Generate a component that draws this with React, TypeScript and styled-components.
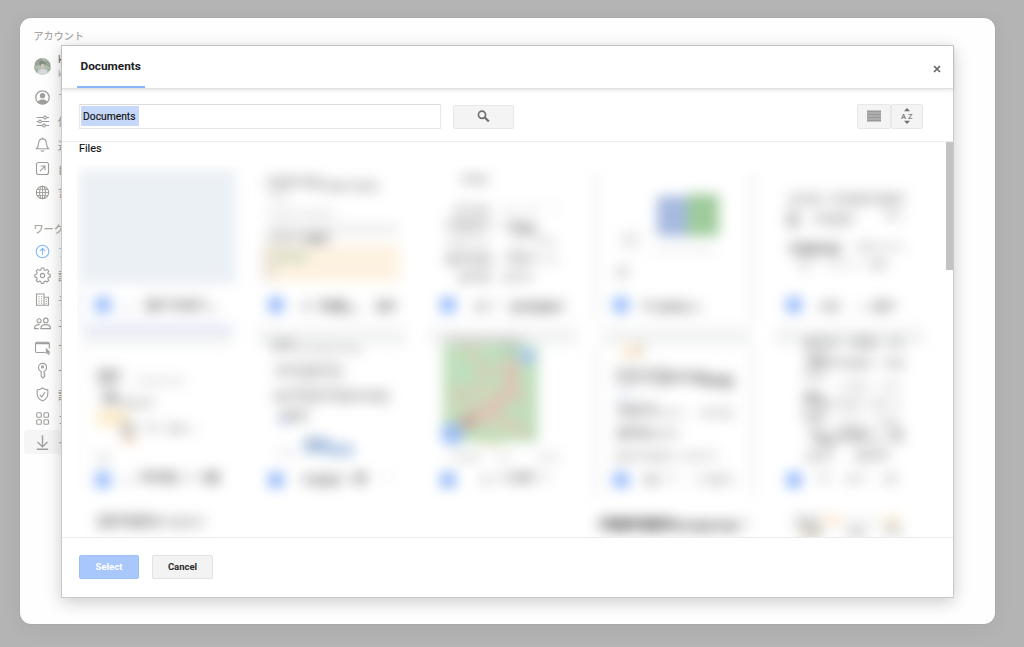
import React from "react";
import styled, { createGlobalStyle } from "styled-components";

const GlobalStyle = createGlobalStyle`
  * { box-sizing: border-box; }
  body {
    margin: 0;
    background: #b4b4b4;
    font-family: Roboto, "Noto Sans CJK JP", sans-serif;
    overflow: hidden;
  }
`;

/* ---------- settings window ---------- */

const Page = styled.div`
  height: 647px;
  padding: 18px 29px 23px 20px;
  background: #b4b4b4;
`;

const SettingsWindow = styled.div`
  position: relative;
  display: flex;
  width: 975px;
  height: 606px;
  border-radius: 11px;
  background: #fefefe;
  box-shadow: 0 4px 22px rgba(0, 0, 0, 0.06), 0 0 1px rgba(0, 0, 0, 0.25);
`;

const Sidebar = styled.nav`
  width: 170px;
  padding: 11px 4px;
  border-radius: 11px 0 0 11px;
  overflow: hidden;
  white-space: nowrap;
`;

const GroupLabel = styled.div<{ $first?: boolean }>`
  height: 16px;
  margin-top: ${(p) => (p.$first ? 0 : "17.500px")};
  margin-bottom: ${(p) => (p.$first ? "8px" : "2.200px")};
  padding-left: 9.5px;
  font-size: 10px;
  line-height: 16px;
  font-weight: 500;
  letter-spacing: 0.1px;
  color: #a8a7a4;
`;

const Profile = styled.div`
  display: flex;
  align-items: center;
  gap: 7px;
  height: 27px;
  padding-left: 10px;
  margin-bottom: 5.400px;
`;

const ProfileText = styled.div`
  display: flex;
  flex-direction: column;
  font-size: 11px;
  line-height: 14px;
  color: #777;
  small {
    font-size: 9.5px;
    color: #b5b5b5;
  }
`;

const NavRow = styled.div<{ $accent?: boolean; $selected?: boolean }>`
  display: flex;
  align-items: center;
  gap: 7px;
  height: 23.8px;
  padding-left: 10px;
  border-radius: 4px;
  font-size: 11px;
  color: ${(p) => (p.$accent ? "#8ab9f5" : "#9c9b98")};
  background: ${(p) => (p.$selected ? "#f5f5f5" : "transparent")};
  svg {
    flex: none;
    color: ${(p) => (p.$accent ? "#82b6fa" : "#9f9e9b")};
  }
`;

const icons: Record<string, React.ReactNode> = {
  account: (
    <>
      <circle cx="8" cy="8" r="6.700" strokeWidth="1.300" />
      <circle cx="8" cy="6.2" r="2.6" fill="currentColor" stroke="none" />
      <path d="M3.300 12.600C4.400 10.600 6 10 8 10s3.600.6 4.700 2.600A6.500 6.500 0 0 1 3.300 12.600Z" fill="currentColor" stroke="none" />
    </>
  ),
  sliders: (
    <>
      <path d="M2 4h7M12 4h2.500M2 8h2M7 8h7.500M2 12h6M11 12h3.500" />
      <circle cx="10.500" cy="4" r="1.400" />
      <circle cx="5.500" cy="8" r="1.400" />
      <circle cx="9.500" cy="12" r="1.400" />
    </>
  ),
  bell: (
    <>
      <path d="M2 12.200c1.600-1.500 2-2.600 2.100-5.400C4.300 4 5.600 2.400 8 2.400s3.700 1.600 3.900 4.400c.1 2.800.5 3.900 2.100 5.400Z" />
      <path d="M8 2.400V1M6.400 13.800c.5 1.300 2.700 1.300 3.200 0" />
    </>
  ),
  arrowBox: (
    <>
      <rect x="2" y="2" width="12" height="12" rx="2" />
      <path d="M5.500 10.600l4.700-4.800M6.300 5.500h4.200v4.200" />
    </>
  ),
  globe: (
    <>
      <circle cx="8" cy="8" r="6.200" />
      <ellipse cx="8" cy="8" rx="2.900" ry="6.200" />
      <path d="M8 1.800v12.400M1.800 8h12.400M2.600 4.900h10.800M2.600 11.100h10.800" strokeWidth=".9" />
    </>
  ),
  upgrade: (
    <>
      <circle cx="8" cy="8" r="6.300" />
      <path d="M8 11.200V5.200M5.600 7.300L8 4.900l2.400 2.400" />
    </>
  ),
  gear: (
    <>
      <path
        d="M6.800.5h2.400l.5 1.900 1.200.5 1.700-1 1.700 1.700-1 1.700.5 1.200 1.900.5v2.400l-1.900.5-.5 1.200 1 1.700-1.700 1.700-1.700-1-1.200.5-.5 1.900H6.800l-.5-1.900-1.200-.5-1.700 1-1.700-1.700 1-1.700-.5-1.200L.3 9.400V7L2.200 6.500l.5-1.200-1-1.700 1.700-1.700 1.700 1 1.200-.5Z"
        strokeLinejoin="round"
      />
      <circle cx="8" cy="8" r="2.100" />
    </>
  ),
  building: (
    <>
      <path d="M2 13.700V2.500h7.500v11.200ZM9.500 5.800H14v7.900H9.500" />
      <path d="M4 5h1M6.600 5h1M4 7.300h1M6.600 7.300h1M4 9.600h1M6.600 9.600h1M4 11.800h1M6.600 11.800h1M11.300 8h1M11.300 10h1M11.300 12h1" />
    </>
  ),
  people: (
    <>
      <circle cx="4.600" cy="5.200" r="2" />
      <circle cx="11.300" cy="4.900" r="2.300" />
      <path d="M6.300 13.100c0-2.500 1.900-4 5-4s4.700 1.500 4.700 4ZM5.400 9.200C2 8.700 0 10.500 0 13.100h4.200" />
    </>
  ),
  browser: (
    <>
      <path d="M11 13H2.200C1.300 13 1 12.500 1 12V4c0-.8.4-1.200 1.200-1.200h11.400c.8 0 1.200.4 1.200 1.200v5" />
      <path d="M1.500 3.900h13" strokeWidth="1.700" />
      <path d="M11.700 8.700v5.600l1.200-1 1 2 .9-.4-.8-2h1.600Z" fill="currentColor" strokeWidth=".5" />
    </>
  ),
  key: (
    <>
      <circle cx="8" cy="4.400" r="1" />
      <path d="M6.700 8.900C4.900 8.200 4 6.900 4 4.900 4 2.600 5.700.9 8 .9s4 1.700 4 4c0 2-.9 3.300-2.500 4v1.400l1 1-1 1.200.9 1-2 2-1.700-1.700Z" />
    </>
  ),
  shield: (
    <>
      <path d="M8 1.500c1.700 1.200 3.300 1.700 5.300 1.900v4.200c0 3.400-2.200 5.600-5.300 7-3.100-1.400-5.300-3.600-5.300-7V3.400C4.700 3.200 6.300 2.700 8 1.500Z" />
      <path d="M5.300 8.500l2 1.900 3.300-4.600" />
    </>
  ),
  grid: (
    <>
      <rect x="2.200" y="2.200" width="4.600" height="4.600" rx="1" />
      <rect x="9.400" y="2.200" width="4.600" height="4.600" rx="1" />
      <rect x="2.200" y="9.200" width="4.600" height="4.600" rx="1" />
      <rect x="9.400" y="9.200" width="4.600" height="4.600" rx="1" />
    </>
  ),
  download: <path d="M8 .8v11.400M3 7.600l5 4.800 5-4.800M2.300 14.800h11.400" strokeWidth="1.400" />,
};

const NavIcon = ({ name }: { name: string }) => (
  <svg width="17" height="17" viewBox="-.5 -.5 17 17" fill="none" stroke="currentColor" strokeWidth="1.1">
    {icons[name]}
  </svg>
);

const Avatar = () => (
  <svg width="17" height="17" viewBox="0 0 17 17">
    <defs>
      <clipPath id="face"><circle cx="8.500" cy="8.500" r="8.400" /></clipPath>
      <filter id="soft"><feGaussianBlur stdDeviation=".55" /></filter>
    </defs>
    <g clipPath="url(#face)">
      <rect width="17" height="17" fill="#b4beb2" />
      <g filter="url(#soft)">
        <path d="M1 2l6-2 3 3-4 4-5 1ZM11 1l5 4v5l-4-3Z" fill="#98a694" />
        <path d="M5 4q4-3 7 1l-1 4-5-1Z" fill="#858b85" />
        <circle cx="8.700" cy="8" r="2.200" fill="#cdc6bb" />
        <path d="M4 17c0-5 2-6 5-6s5 2 5 6Z" fill="#d4dadd" />
        <path d="M0 9l4 2-1 4-3-1ZM13 11l4-1v4Z" fill="#a2b09c" />
      </g>
    </g>
  </svg>
);

const accountRows = [
  ["account", "マ"],
  ["sliders", "個"],
  ["bell", "通"],
  ["arrowBox", "自"],
  ["globe", "言"],
];
const workspaceRows = [
  ["upgrade", "ア"],
  ["gear", "設"],
  ["building", "チ"],
  ["people", "ユ"],
  ["browser", "サ"],
  ["key", "セ"],
  ["shield", "認"],
  ["grid", "コ"],
  ["download", "イ"],
];

/* ---------- picker dialog ---------- */

const Dialog = styled.section`
  position: absolute;
  left: 41px;
  top: 27px;
  width: 893px;
  height: 553px;
  display: flex;
  flex-direction: column;
  background: #fff;
  border: 1px solid #c9c9c9;
  box-shadow: 0 4px 16px rgba(0, 0, 0, 0.2);
`;

const DialogHeader = styled.header`
  display: flex;
  justify-content: space-between;
  height: 43px;
  padding: 0 11px 0 15px;
  border-bottom: 1px solid #e2e2e2;
  box-shadow: 0 1px 4px rgba(0, 0, 0, 0.12);
  flex: none;
`;

const Tab = styled.div`
  height: 42px;
  padding: 0 3.5px;
  width: 68px;
  border-bottom: 2px solid #8ab6f9;
  font-size: 11.800px;
  font-weight: 700;
  line-height: 41px;
  color: #202124;
`;

const CloseButton = styled.button`
  width: 10px;
  padding: 4px 0 0;
  border: 0;
  background: none;
  color: #666;
  display: flex;
  align-items: center;
  justify-content: center;
`;

const Toolbar = styled.div`
  display: flex;
  align-items: center;
  height: 53px;
  padding: 2px 30px 0 17px;
  border-bottom: 1px solid #eee;
  flex: none;
`;

const SearchField = styled.div`
  display: flex;
  align-items: center;
  width: 362px;
  height: 25px;
  padding: 0 1px;
  border: 1px solid #e8e8e8;
  border-top-color: #dcdcdc;
`;

const SelectedText = styled.span`
  height: 20px;
  width: 58px;
  padding-left: 2px;
  border-radius: 1px;
  background: #c6d8f8;
  font-size: 10.300px;
  font-weight: 400;
  line-height: 21px;
  color: #111;
  -webkit-text-stroke: 0.15px #111;
`;

const ToolButton = styled.button<{ $width: number; $push?: boolean }>`
  display: flex;
  align-items: center;
  justify-content: center;
  width: ${(p) => p.$width}px;
  height: 25px;
  margin-left: ${(p) => (p.$push ? "auto" : "0")};
  padding: 0;
  border: 1px solid #e8e8e8;
  border-radius: 2px;
  background: #f4f4f4;
  color: #707070;
`;

const SearchButton = styled(ToolButton)`
  margin: 1px 0 0 12px;
  height: 24px;
  svg {
    margin-bottom: 1px;
  }
`;

const Results = styled.div`
  position: relative;
  display: flex;
  height: 395px;
  flex: none;
`;

const ResultsBody = styled.div`
  flex: 1;
  min-width: 0;
  padding-left: 15px;
  overflow: hidden;
`;

const ResultsTitle = styled.h2`
  margin: 0;
  padding-left: 2px;
  height: 23px;
  font-size: 10.800px;
  font-weight: 400;
  line-height: 14px;
  color: #111;
  -webkit-text-stroke: 0.15px #111;
`;

const Scrollbar = styled.div`
  width: 7px;
  height: 128px;
  background: #c3c3c3;
`;

const FileGrid = styled.div`
  display: grid;
  grid-template-columns: repeat(5, 172.7px);
  grid-auto-rows: 175px;
  height: 372px;
  padding: 3px 0 0 2px;
  overflow: hidden;
`;

const FilePicture = styled.svg`
  display: block;
  width: 172.7px;
  height: 175px;
  overflow: visible;
`;

const Blurred = styled.g<{ $radius: number }>`
  filter: blur(${(p) => p.$radius}px);
`;

const Footer = styled.footer`
  display: flex;
  align-items: center;
  gap: 13px;
  flex: 1;
  padding: 0 17px 2px;
  border-top: 1px solid #ebebeb;
`;

const ActionButton = styled.button<{ $primary?: boolean }>`
  width: ${(p) => (p.$primary ? 60 : 61)}px;
  height: 24px;
  padding: 0;
  border: 1px solid ${(p) => (p.$primary ? "#9dc0f8" : "#e2e2e2")};
  border-radius: 2px;
  background: ${(p) => (p.$primary ? "#a8c7fa" : "#f3f3f3")};
  color: ${(p) => (p.$primary ? "#fff" : "#2a2a2a")};
  font: 700 9.500px Roboto, sans-serif;
`;

/* x, y (centre), width, height, strength or colour */
type Mark = [number, number, number, number, (number | string)?];
type FileArt = { blocks?: Mark[]; marks: Mark[]; title: Mark[]; edges?: boolean; map?: boolean };

const rows: FileArt[][] = [
  [
    {
      blocks: [[0, 59, 157, 115, "#ebf0f5"], [4, 160, 150, 6, "#d8dff4"], [-4, 138, 6, 40, "#eceffa"]],
      marks: [],
      title: [[44, 141, 8, 4, 0.25], [67, 137, 18, 8, 0.5], [87, 137, 40, 8, 0.4], [131, 141, 6, 5, 0.3]],
    },
    {
      blocks: [[14, 61, 133, 9, "#ebebeb"], [11, 95, 137, 37, "#fdf2e0"], [10, 95, 14, 34, "#ede5d8"], [22, 89, 34, 13, "#dcdfc8"]],
      marks: [[14, 14, 56, 9, 0.28], [72, 18, 54, 8, 0.26], [15, 27, 20, 6, 0.15], [15, 46, 68, 7, 0.12], [16, 70, 62, 8, 0.23], [56, 71, 20, 7, 0.28]],
      title: [[50, 138, 9, 7, 0.35], [67, 138, 28, 9, 0.5], [98, 141, 9, 5, 0.3], [125, 138, 19, 8, 0.5]],
    },
    {
      marks: [[37, 11, 27, 6, 0.32], [30, 42, 35, 7, 0.28], [82, 42, 9, 5, 0.22], [102, 42, 10, 5, 0.22], [128, 41, 4, 7, 0.15], [22, 57, 45, 8, 0.32], [80, 58, 20, 8, 0.32], [95, 61, 18, 8, 0.36], [22, 74, 42, 6, 0.19], [86, 74, 13, 5, 0.16], [109, 74, 23, 6, 0.2], [22, 91, 45, 9, 0.3], [81, 90, 28, 9, 0.27], [110, 91, 26, 5, 0.15], [35, 109, 32, 8, 0.3], [79, 109, 30, 7, 0.26]],
      title: [[51, 139, 13, 8, 0.42], [71, 137, 6, 6, 0.18], [87, 139, 53, 8, 0.46]],
    },
    {
      blocks: [[60, 48, 31, 40, "#a6b9e0"], [90, 47, 32, 42, "#9fcb9c"]],
      marks: [[25, 70, 18, 8, 0.18], [28, 82, 14, 5, 0.1], [60, 82, 60, 6, 0.07], [20, 104, 11, 8, 0.3]],
      title: [[46, 138, 10, 9, 0.38], [61, 139, 28, 8, 0.45], [90, 139, 15, 7, 0.2]],
      edges: true,
    },
    {
      marks: [[19, 31, 33, 9, 0.26], [60, 31, 75, 9, 0.28], [17, 51, 12, 14, 0.3], [44, 51, 40, 11, 0.24], [114, 47, 17, 7, 0.2], [19, 81, 51, 11, 0.38], [87, 79, 20, 7, 0.25], [108, 79, 26, 6, 0.16], [29, 97, 11, 6, 0.22], [53, 97, 40, 5, 0.13], [99, 96, 17, 7, 0.28]],
      title: [[50, 138, 20, 7, 0.35], [89, 141, 8, 5, 0.3], [103, 138, 22, 8, 0.42]],
    },
  ],
  [
    {
      blocks: [[18, 75, 31, 16, "#fcebc8"], [45, 97, 12, 9, "#fae0c2"]],
      marks: [[19, 33, 22, 12, 0.36], [55, 38, 50, 6, 0.15], [24, 55, 15, 14, 0.4], [41, 60, 36, 8, 0.22], [44, 87, 10, 17, 0.38], [64, 84, 18, 7, 0.18], [89, 86, 17, 9, 0.28], [107, 87, 12, 5, 0.15], [19, 115, 10, 8, 0.17]],
      title: [[45, 137, 8, 5, 0.2], [61, 134, 37, 9, 0.42], [104, 134, 18, 6, 0.18], [126, 134, 14, 9, 0.5]],
    },
    {
      blocks: [[52, 103, 27, 14, "#abc4e5"], [74, 107, 28, 12, "#b5cae8"], [25, 78, 14, 9, "#dfe6fa"]],
      marks: [[20, 2, 22, 8, 0.3], [42, 6, 66, 7, 0.18], [24, 27, 66, 10, 0.26], [40, 39, 51, 6, 0.1], [22, 53, 115, 10, 0.26], [29, 73, 27, 9, 0.35], [54, 98, 20, 7, 0.15], [24, 110, 21, 6, 0.1]],
      title: [[50, 137, 42, 9, 0.38], [102, 135, 12, 10, 0.48], [132, 134, 8, 5, 0.12]],
    },
    {
      marks: [[26, 114, 30, 7, 0.16], [70, 114, 17, 6, 0.14], [112, 114, 23, 6, 0.14]],
      title: [[57, 137, 10, 7, 0.3], [75, 134, 12, 7, 0.22], [89, 134, 22, 8, 0.38], [118, 134, 7, 7, 0.2]],
      map: true,
    },
    {
      blocks: [[26, 8, 20, 12, "#fbe6cb"], [20, 53, 12, 12, "#edf0fb"]],
      marks: [[39, 6, 8, 7, 0.2], [18, 33, 50, 15, 0.24], [66, 34, 43, 10, 0.35], [106, 38, 30, 10, 0.43], [20, 67, 40, 11, 0.3], [61, 70, 28, 6, 0.2], [103, 70, 33, 7, 0.23], [20, 90, 34, 10, 0.36], [56, 91, 27, 8, 0.23], [18, 113, 60, 8, 0.22], [84, 113, 38, 7, 0.18]],
      title: [[46, 137, 17, 8, 0.36], [71, 134, 9, 5, 0.2], [97, 136, 11, 6, 0.2], [113, 136, 11, 8, 0.32], [128, 137, 9, 7, 0.33]],
      edges: true,
    },
    {
      marks: [[34, 0, 36, 8, 0.3], [80, 0, 27, 9, 0.32], [118, 0, 15, 8, 0.26], [37, 18, 21, 12, 0.38], [60, 20, 43, 9, 0.26], [113, 20, 21, 8, 0.26], [33, 32, 22, 9, 0.22], [70, 43, 28, 7, 0.18], [110, 43, 21, 7, 0.16], [34, 55, 18, 12, 0.36], [48, 62, 12, 10, 0.3], [62, 60, 30, 8, 0.2], [101, 61, 14, 8, 0.28], [121, 60, 10, 7, 0.23], [32, 74, 22, 10, 0.3], [64, 78, 30, 6, 0.15], [105, 78, 24, 7, 0.2], [38, 91, 17, 8, 0.3], [47, 98, 20, 10, 0.36], [67, 92, 32, 10, 0.35], [101, 95, 12, 7, 0.2], [120, 92, 13, 10, 0.33], [36, 113, 28, 8, 0.25], [86, 112, 33, 9, 0.28]],
      title: [[49, 135, 10, 8, 0.28], [76, 137, 13, 8, 0.28], [92, 133, 7, 6, 0.18], [115, 136, 11, 9, 0.3]],
    },
  ],
  [
    { marks: [[19, 3, 57, 10, 0.38], [74, 4, 52, 8, 0.28]], title: [] },
    { marks: [], title: [] },
    { marks: [], title: [] },
    { marks: [[2, 6, 75, 11, 0.58], [76, 8, 63, 8, 0.48], [138, 6, 15, 6, 0.22]], title: [] },
    {
      blocks: [[50, 2, 25, 8, "#fbe8cf"], [114, 3, 15, 9, "#faebc9"], [30, 16, 20, 9, "#f1e8d5"]],
      marks: [[24, 3, 24, 8, 0.3], [80, 3, 30, 4, 0.12], [30, 13, 22, 8, 0.25], [76, 14, 19, 8, 0.3], [115, 12, 16, 9, 0.25]],
      title: [],
    },
  ],
];

const MapArt = () => (
  <g>
    <rect x="19" y="2" width="95" height="97" fill="#c0dfbc" />
    <path d="M22 -2h78" stroke="#bcbcb8" strokeWidth="5" />
    <path d="M42 2l20 28 29-12-9 30-27 17-25 21M62 30l-10 20-15-5M80 43L62 80l45 13M28 43l20 25M64 70l36 13M87 26l13 38" fill="none" stroke="#d9cab5" strokeWidth="6" />
    <path d="M83 23l6 5-6 26-22 16-23 14" fill="none" stroke="#dcc5b5" strokeWidth="14" />
    <path d="M52 53l18-7M66 76l25 13M24 60l12 8" stroke="#d1d8b9" strokeWidth="9" />
    <circle cx="85" cy="7" r="7" fill="#b3d2b8" />
    <circle cx="103" cy="13" r="9" fill="#abc9ec" />
    <circle cx="28" cy="91" r="11" fill="#98bcf5" />
    <circle cx="44" cy="79" r="8" fill="#c2ac9f" />
    <path d="M55 100h25" stroke="#e8ddb8" strokeWidth="4" />
  </g>
);

const MarkRect = ({ mark: [x, y, w, h, tone] }: { mark: Mark }) => (
  <rect
    x={x}
    y={y - h / 2}
    width={w}
    height={h}
    rx={Math.min(2, h / 2)}
    fill={typeof tone === "string" ? tone : "#333"}
    fillOpacity={typeof tone === "number" ? tone : 1}
  />
);

/* text lines are drawn as short word-like runs that sit unevenly on the line */
const TextRun = ({ mark: [x, y, w, h, tone] }: { mark: Mark }) => {
  const count = Math.max(1, Math.round(w / 11));
  const step = w / count;
  return (
    <g fill="#333" fillOpacity={Number(tone) * 1.05}>
      {Array.from({ length: count }, (_, i) => {
        const wobble = Math.sin(x * 1.7 + y * 2.3 + i * 2.1);
        const height = h * (1 + wobble * 0.22);
        return <rect key={i} x={x + i * step} y={y - height / 2 + wobble * 0.6} width={step} height={height} />;
      })}
    </g>
  );
};

const FileCard = ({ art, row, col }: { art: FileArt; row: number; col: number }) => (
  <FilePicture viewBox="0 0 172.7 175">
    <Blurred $radius={6.5}>
      {row === 0 && <rect x="5" y="158" width="149" height="19" fill="#f5f5f5" />}
      {row === 0 && <rect x="5" y="169" width="148" height="7" fill="#eff1f1" />}
      {art.edges && <path d="M-1 4v150M155 4v150" stroke="#f8f8f8" strokeWidth="9" />}
      {row === 1 && col === 0 && <path d="M0 5v147" stroke="#f8f8f8" strokeWidth="3" />}
      {art.map && <MapArt />}
      {art.blocks?.map((m, i) => <MarkRect key={i} mark={m} />)}
    </Blurred>
    <Blurred $radius={7}>
      {art.marks.map((m, i) => <TextRun key={i} mark={m} />)}
      {art.title.map((m, i) => <TextRun key={i} mark={m} />)}
    </Blurred>
    {row < 2 && (
      <Blurred $radius={7}>
        <rect x="17" y="130" width="14" height="14" rx="5" fill="#6c9ff8" />
      </Blurred>
    )}
    {row === 2 && col === 3 && (
      <path d="M1 19.500h143" stroke="#aaa" strokeWidth="1" strokeDasharray="36 2 18 1 25 1" />
    )}
    {row === 2 && col === 4 && (
      <path d="M22 19.500h56" stroke="#bbb" strokeWidth="1" strokeDasharray="9 1 6 3" />
    )}
  </FilePicture>
);

export default function App() {
  return (
    <Page>
      <GlobalStyle />
      <SettingsWindow>
        <Sidebar>
          <GroupLabel $first>アカウント</GroupLabel>
          <Profile>
            <Avatar />
            <ProfileText>
              k
              <small>k</small>
            </ProfileText>
          </Profile>
          {accountRows.map(([icon, label]) => (
            <NavRow key={icon}>
              <NavIcon name={icon} />
              {label}
            </NavRow>
          ))}
          <GroupLabel>ワーク</GroupLabel>
          {workspaceRows.map(([icon, label]) => (
            <NavRow key={icon} $accent={icon === "upgrade"} $selected={icon === "download"}>
              <NavIcon name={icon} />
              {label}
            </NavRow>
          ))}
        </Sidebar>

        <Dialog>
          <DialogHeader>
            <Tab>Documents</Tab>
            <CloseButton aria-label="Close">
              <svg width="8" height="8" viewBox="0 0 8 8" stroke="currentColor" strokeWidth="1.700">
                <path d="M1 1l6 6M7 1L1 7" />
              </svg>
            </CloseButton>
          </DialogHeader>

          <Toolbar>
            <SearchField>
              <SelectedText>Documents</SelectedText>
            </SearchField>
            <SearchButton $width={61} aria-label="Search">
              <svg width="13" height="13" viewBox="0 0 13 13" fill="none" stroke="currentColor">
                <circle cx="5" cy="4.800" r="3.600" strokeWidth="1.700" />
                <path d="M7.800 7.500l4 4" strokeWidth="2.300" />
              </svg>
            </SearchButton>
            <ToolButton $width={34} $push aria-label="List view">
              <svg width="14" height="12" viewBox="0 0 14 12">
                <rect width="14" height="11" y=".5" fill="#b5b5b5" />
                <path d="M0 1.500h14M0 4.500h14M0 7.500h14M0 10.500h14" stroke="#999" strokeWidth="1.300" />
              </svg>
            </ToolButton>
            <ToolButton $width={32} aria-label="Sort">
              <svg width="14" height="18" viewBox="0 0 14 18" fill="currentColor">
                <path d="M7 1l3 3.300H4ZM7 17l3-3.300H4Z" />
                <text x="1" y="11.800" fontSize="7.500" fontWeight="700" fill="#858585" fontFamily="Roboto">A</text>
                <text x="8" y="11.800" fontSize="7.500" fontWeight="700" fill="#858585" fontFamily="Roboto">Z</text>
              </svg>
            </ToolButton>
          </Toolbar>

          <Results>
            <ResultsBody>
              <ResultsTitle>Files</ResultsTitle>
              <FileGrid>
                {rows.flatMap((files, row) =>
                  files.map((art, col) => <FileCard key={`${row}-${col}`} art={art} row={row} col={col} />)
                )}
              </FileGrid>
            </ResultsBody>
            <Scrollbar />
          </Results>

          <Footer>
            <ActionButton $primary>Select</ActionButton>
            <ActionButton>Cancel</ActionButton>
          </Footer>
        </Dialog>
      </SettingsWindow>
    </Page>
  );
}
